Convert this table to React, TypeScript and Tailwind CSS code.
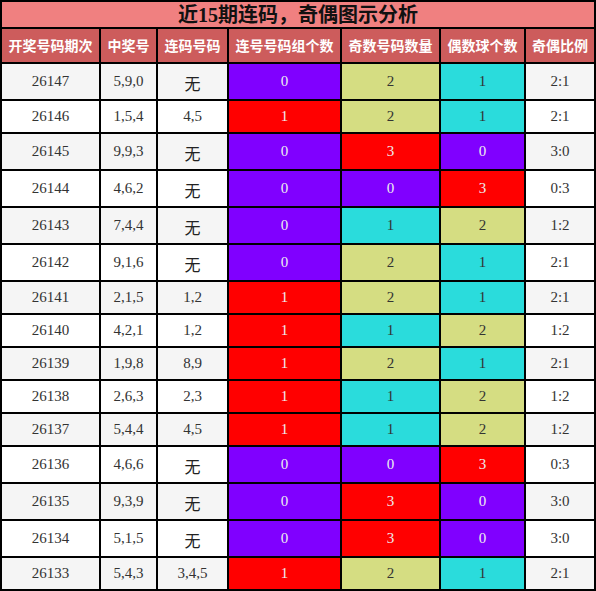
const rows: [string, string, string, number, number, number, string][] = [
  ["26147", "5,9,0", "无", 0, 2, 1, "2:1"],
  ["26146", "1,5,4", "4,5", 1, 2, 1, "2:1"],
  ["26145", "9,9,3", "无", 0, 3, 0, "3:0"],
  ["26144", "4,6,2", "无", 0, 0, 3, "0:3"],
  ["26143", "7,4,4", "无", 0, 1, 2, "1:2"],
  ["26142", "9,1,6", "无", 0, 2, 1, "2:1"],
  ["26141", "2,1,5", "1,2", 1, 2, 1, "2:1"],
  ["26140", "4,2,1", "1,2", 1, 1, 2, "1:2"],
  ["26139", "1,9,8", "8,9", 1, 2, 1, "2:1"],
  ["26138", "2,6,3", "2,3", 1, 1, 2, "1:2"],
  ["26137", "5,4,4", "4,5", 1, 1, 2, "1:2"],
  ["26136", "4,6,6", "无", 0, 0, 3, "0:3"],
  ["26135", "9,3,9", "无", 0, 3, 0, "3:0"],
  ["26134", "5,1,5", "无", 0, 3, 0, "3:0"],
  ["26133", "5,4,3", "3,4,5", 1, 2, 1, "2:1"],
];

const headers = ["开奖号码期次", "中奖号", "连码号码", "连号号码组个数", "奇数号码数量", "偶数球个数", "奇偶比例"];

const cols = "grid grid-cols-[97px_55px_69px_111px_97px_83px_68px] gap-[2px]";

// 0 紫, 1 青, 2 黄绿, 3 红
const countColor = ["bg-[#8000ff] text-[#eeeeee]", "bg-[#2adcdc] text-[#333333]", "bg-[#d5dd82] text-[#333333]", "bg-[#ff0000] text-[#eeeeee]"];
const linkColor = ["bg-[#8000ff] text-[#eeeeee]", "bg-[#ff0000] text-[#eeeeee]"];

export default function App() {
  return (
    <div className="w-[596px] bg-black p-[2px] flex flex-col gap-[2px] font-['Liberation_Serif','Noto_Sans_CJK_SC',serif]">
      <div className="h-[25px] bg-[#f08080] flex items-center justify-center text-[20px] font-bold text-[#111] leading-none">
        近15期连码，奇偶图示分析
      </div>
      <div className={cols + " h-[33px]"}>
        {headers.map((h) => (
          <div
            key={h}
            className="bg-[#cd5c5c] text-white text-[14px] font-bold flex items-center justify-center font-['Noto_Sans_CJK_SC',sans-serif]"
          >
            {h}
          </div>
        ))}
      </div>
      {rows.map((r, i) => {
        const bg = i % 2 === 0 ? "bg-[#f5f5f5]" : "bg-white";
        const tall = r[2] === "无";
        return (
          <div key={r[0]} className={cols + (tall ? " h-[35px]" : " h-[31px]") + " text-[15px] text-[#333333]"}>
            <div className={bg + " flex items-center justify-center"}>{r[0]}</div>
            <div className={bg + " flex items-center justify-center"}>{r[1]}</div>
            <div className={bg + " flex items-center justify-center" + (tall ? " text-[16px] text-[#222] font-['Noto_Sans_CJK_SC',sans-serif] pt-[3px]" : "")}>
              {r[2]}
            </div>
            <div className={linkColor[r[3]] + " flex items-center justify-center"}>{r[3]}</div>
            <div className={countColor[r[4]] + " flex items-center justify-center"}>{r[4]}</div>
            <div className={countColor[r[5]] + " flex items-center justify-center"}>{r[5]}</div>
            <div className={bg + " flex items-center justify-center"}>{r[6]}</div>
          </div>
        );
      })}
    </div>
  );
}
